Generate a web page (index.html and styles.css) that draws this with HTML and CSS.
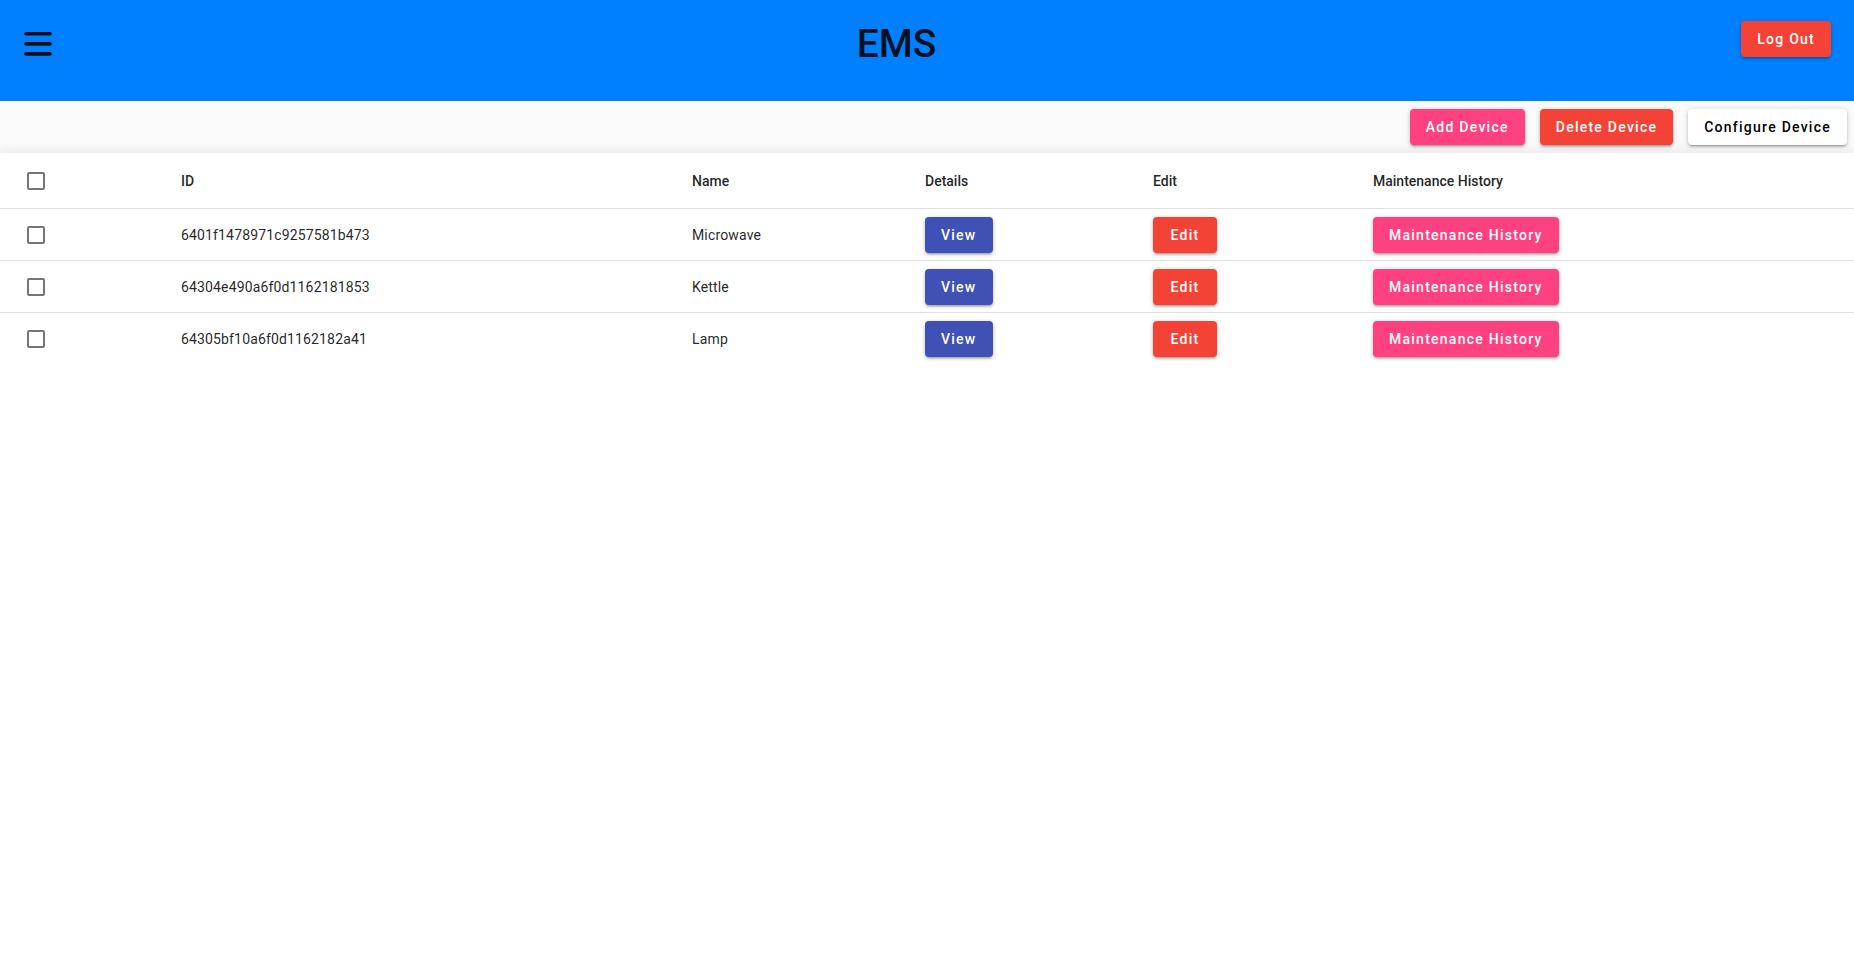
FILE: index.html
```html
<!DOCTYPE html>
<html lang="en">
<head>
<meta charset="utf-8">
<title>EMS</title>
<link rel="stylesheet" href="styles.css">
</head>
<body>
<header class="appbar">
  <button class="menu-btn" aria-label="menu">
    <svg width="28" height="26" viewBox="0 0 28 26"><g stroke="#001121" stroke-width="3.6" stroke-linecap="round"><line x1="2" y1="3.7" x2="26" y2="3.7"/><line x1="2" y1="13.9" x2="26" y2="13.9"/><line x1="2" y1="23.9" x2="26" y2="23.9"/></g></svg>
  </button>
  <h1 class="title">EMS</h1>
  <button class="btn btn-red logout">Log Out</button>
</header>
<div class="toolbar">
  <button class="btn btn-pink">Add Device</button>
  <button class="btn btn-red">Delete Device</button>
  <button class="btn btn-white">Configure Device</button>
</div>
<div class="grid">
  <div class="row head">
    <div class="cell cb"><span class="checkbox"></span></div>
    <div class="cell">ID</div>
    <div class="cell">Name</div>
    <div class="cell">Details</div>
    <div class="cell">Edit</div>
    <div class="cell">Maintenance History</div>
  </div>
  <div class="row">
    <div class="cell cb"><span class="checkbox"></span></div>
    <div class="cell">6401f1478971c9257581b473</div>
    <div class="cell">Microwave</div>
    <div class="cell"><button class="btn btn-indigo">View</button></div>
    <div class="cell"><button class="btn btn-red">Edit</button></div>
    <div class="cell"><button class="btn btn-pink">Maintenance History</button></div>
  </div>
  <div class="row">
    <div class="cell cb"><span class="checkbox"></span></div>
    <div class="cell">64304e490a6f0d1162181853</div>
    <div class="cell">Kettle</div>
    <div class="cell"><button class="btn btn-indigo">View</button></div>
    <div class="cell"><button class="btn btn-red">Edit</button></div>
    <div class="cell"><button class="btn btn-pink">Maintenance History</button></div>
  </div>
  <div class="row last">
    <div class="cell cb"><span class="checkbox"></span></div>
    <div class="cell">64305bf10a6f0d1162182a41</div>
    <div class="cell">Lamp</div>
    <div class="cell"><button class="btn btn-indigo">View</button></div>
    <div class="cell"><button class="btn btn-red">Edit</button></div>
    <div class="cell"><button class="btn btn-pink">Maintenance History</button></div>
  </div>
</div>
</body>
</html>
```
FILE: styles.css
```css
* { box-sizing: border-box; }
html, body { margin: 0; padding: 0; background: #fff; }
body { font-family: Roboto, "Liberation Sans", Arial, sans-serif; color: rgba(0,0,0,0.87); }

.appbar {
  height: 101px;
  background: #0080ff;
  display: flex;
  justify-content: space-between;
  align-items: flex-start;
  padding: 0 23px 0 24px;
}
.menu-btn {
  margin-top: 30px;
  padding: 0;
  border: 0;
  background: none;
  width: 28px;
  height: 26px;
  display: block;
}
.menu-btn svg { display: block; }
.title {
  margin: 23px 0 0;
  font-size: 39px;
  line-height: 42px;
  font-weight: 500;
  color: #001121;
}
.logout { margin-top: 21px; }

.btn {
  height: 36px;
  min-width: 64px;
  border: 0;
  border-radius: 4px;
  padding: 0 16px;
  font-family: Roboto, "Liberation Sans", Arial, sans-serif;
  font-size: 14px;
  font-weight: 500;
  letter-spacing: 1.25px;
  color: #fff;
  box-shadow: 0 2px 2px 0 rgba(0,0,0,0.14), 0 3px 1px -2px rgba(0,0,0,0.12), 0 1px 5px 0 rgba(0,0,0,0.2);
  cursor: pointer;
  white-space: nowrap;
}
.btn-red { background: #f44336; }
.btn-pink { background: #ff4081; }
.btn-indigo { background: #3f51b5; }
.btn-white { background: #fff; color: #000; }

.toolbar {
  height: 52px;
  background: #fafafa;
  display: flex;
  justify-content: flex-end;
  align-items: center;
  gap: 15px;
  padding-right: 7px;
}

.grid {
  position: relative;
  box-shadow: 0 -3px 10px rgba(0,0,0,0.07);
  background: #fff;
}
.row {
  display: grid;
  grid-template-columns: 171px 511px 233px 228px 220px 1fr;
  height: 52px;
  border-bottom: 1px solid #e0e0e0;
  align-items: center;
  font-size: 14px;
  letter-spacing: 0.15px;
}
.row.head { height: 56px; font-weight: 500; letter-spacing: 0; }
.row.last { border-bottom: 0; }
.cell { padding-left: 10px; display: flex; align-items: center; }
.cell.cb { padding-left: 27px; }
.checkbox {
  display: block;
  width: 18px;
  height: 18px;
  border: 2px solid #757575;
  border-radius: 2px;
}
```
